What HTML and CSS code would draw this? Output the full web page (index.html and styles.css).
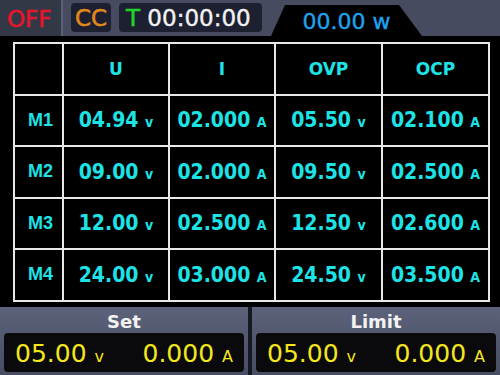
FILE: index.html
```html
<!DOCTYPE html>
<html lang="en">
<head>
    <meta charset="UTF-8">
    <meta name="viewport" content="width=device-width, initial-scale=1.0">
    <title>Power Supply</title>
    <link rel="stylesheet" href="styles.css">
</head>
<body>
    <div class="screen">
        <div class="topbar">
            <div class="state">OFF</div>
            <div class="mode">CC</div>
            <div class="timer"><span class="t">T</span> 00:00:00</div>
            <div class="power">00.00 w</div>
        </div>

        <div class="main">
            <table class="memory">
                <colgroup>
                    <col class="col-name">
                    <col class="col-u">
                    <col class="col-i">
                    <col class="col-ovp">
                    <col class="col-ocp">
                </colgroup>
                <tr class="head">
                    <td class="name"></td>
                    <td>U</td>
                    <td>I</td>
                    <td>OVP</td>
                    <td>OCP</td>
                </tr>
                <tr>
                    <td class="name">M1</td>
                    <td>04.94 <span class="unit">v</span></td>
                    <td>02.000 <span class="unit">A</span></td>
                    <td>05.50 <span class="unit">v</span></td>
                    <td>02.100 <span class="unit">A</span></td>
                </tr>
                <tr>
                    <td class="name">M2</td>
                    <td>09.00 <span class="unit">v</span></td>
                    <td>02.000 <span class="unit">A</span></td>
                    <td>09.50 <span class="unit">v</span></td>
                    <td>02.500 <span class="unit">A</span></td>
                </tr>
                <tr>
                    <td class="name">M3</td>
                    <td>12.00 <span class="unit">v</span></td>
                    <td>02.500 <span class="unit">A</span></td>
                    <td>12.50 <span class="unit">v</span></td>
                    <td>02.600 <span class="unit">A</span></td>
                </tr>
                <tr>
                    <td class="name">M4</td>
                    <td>24.00 <span class="unit">v</span></td>
                    <td>03.000 <span class="unit">A</span></td>
                    <td>24.50 <span class="unit">v</span></td>
                    <td>03.500 <span class="unit">A</span></td>
                </tr>
            </table>
        </div>

        <div class="bottom">
            <div class="panel">
                <div class="title">Set</div>
                <div class="readout">
                    <span>05.00 <span class="unit">v</span></span>
                    <span>0.000 <span class="unit">A</span></span>
                </div>
            </div>
            <div class="panel">
                <div class="title">Limit</div>
                <div class="readout">
                    <span>05.00 <span class="unit">v</span></span>
                    <span>0.000 <span class="unit">A</span></span>
                </div>
            </div>
        </div>
    </div>
</body>
</html>
```

FILE: styles.css
```css
body {
    margin: 0;
    padding: 0;
    background-color: #000;
    font-family: "DejaVu Sans", "Liberation Sans", sans-serif;
}

.screen {
    width: 500px;
    height: 375px;
    display: flex;
    flex-direction: column;
    overflow: hidden;
}

/* status bar */
.topbar {
    height: 36px;
    display: flex;
    align-items: flex-end;
    background-color: #464b60;
}

.state {
    width: 63px;
    height: 36px;
    box-sizing: border-box;
    padding-left: 7px;
    background-color: #333846;
    border-right: 2px solid #5a6075;
    color: #e8142c;
    font-size: 23px;
    line-height: 38px;
    -webkit-text-stroke: 0.5px #e8142c;
}

.mode,
.timer {
    height: 29px;
    align-self: flex-start;
    margin-top: 3px;
    background-color: #1d2030;
    border-radius: 4px;
    font-size: 23px;
    line-height: 31px;
}

.mode {
    margin-left: 8px;
    width: 40px;
    text-align: center;
    color: #e38a1c;
    -webkit-text-stroke: 0.5px #e38a1c;
}

.timer {
    margin-left: 8px;
    width: 143px;
    box-sizing: border-box;
    padding-left: 7px;
    color: #f2f2f2;
    -webkit-text-stroke: 0.4px #f2f2f2;
}

.timer .t {
    color: #22d12a;
    -webkit-text-stroke: 0.6px #22d12a;
}

.power {
    margin-left: 9px;
    width: 151px;
    height: 31px;
    background-color: #000;
    clip-path: polygon(14px 0, 128px 0, 151px 100%, 0 100%);
    color: #1ea2ef;
    font-size: 22px;
    line-height: 33px;
    text-align: center;
    -webkit-text-stroke: 0.4px #1ea2ef;
}

/* memory table */
.main {
    height: 271px;
    padding: 6px 0 0 13px;
    box-sizing: border-box;
}

.memory {
    width: 475px;
    border-collapse: collapse;
    table-layout: fixed;
}

.col-name {
    width: 49px;
}

.col-u,
.col-i {
    width: 106px;
}

.col-ovp,
.col-ocp {
    width: 107px;
}

.memory td {
    height: 49.5px;
    padding: 0;
    border: 2px solid #e8e8e8;
    color: #1ee3e6;
    font-family: "DejaVu Sans Condensed", "DejaVu Sans", sans-serif;
    font-stretch: condensed;
    font-size: 21px;
    font-weight: bold;
    text-align: center;
    white-space: nowrap;
}

.memory td.name {
    font-family: "Liberation Sans", Arial, sans-serif;
    font-size: 18px;
    text-align: right;
    padding-right: 9px;
}

.memory .head td {
    font-family: "DejaVu Sans", sans-serif;
    font-stretch: normal;
    font-size: 17px;
}

.unit {
    font-size: 14px;
}

/* set / limit panels */
.bottom {
    flex: 1;
    display: flex;
    gap: 4px;
    background-color: #161822;
}

.panel {
    flex: 1;
    padding: 0 4px;
    background: linear-gradient(#5b6279, #474d63);
}

.title {
    height: 26px;
    text-align: center;
    color: #f2f2f2;
    font-size: 18px;
    font-weight: bold;
    line-height: 30px;
}

.readout {
    height: 39px;
    display: flex;
    justify-content: space-between;
    padding: 0 11px;
    background-color: #0a0a0c;
    border-radius: 4px;
    color: #f4e61c;
    font-size: 25px;
    line-height: 42px;
}

.readout .unit {
    font-size: 16px;
}
```
